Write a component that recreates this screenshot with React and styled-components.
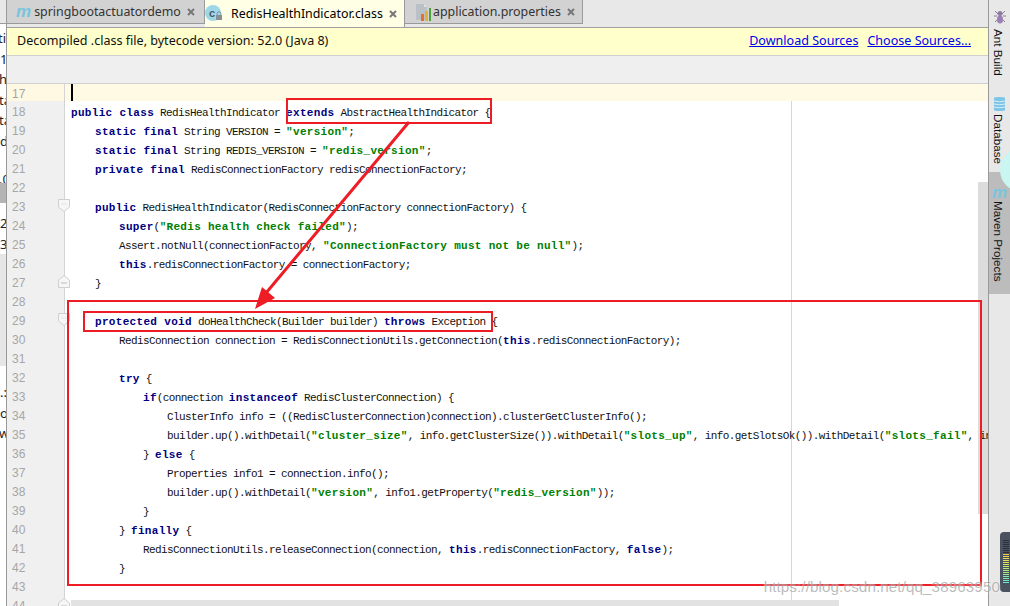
import React from 'react';
import styled, { createGlobalStyle } from 'styled-components';

const GlobalStyle = createGlobalStyle`
  html, body { margin: 0; padding: 0; background: #fff; }
  body { font-family: "Noto Sans", "Liberation Sans", sans-serif; }
`;

const Page = styled.div`
  position: relative;
  display: flex;
  width: 1010px;
  height: 606px;
  overflow: hidden;
  background: #fff;
`;

/* window behind the editor, only a sliver shows */
const LeftStrip = styled.div`
  display: flex;
  flex-direction: column;
  flex: 0 0 6px;
  width: 6px;
  overflow: hidden;
  border-right: 1px solid #9a9a9a;
  background: #fff;
`;

const StripBlock = styled.div`
  flex: 0 0 ${p => p.$h}px;
  background: ${p => p.$bg || '#fff'};
  border-bottom: ${p => (p.$line ? '1px solid #9a9a9a' : '0')};
  box-sizing: border-box;
`;

const StripText = styled.div`
  flex: 0 0 ${p => p.$h || 20.5}px;
  line-height: ${p => p.$h || 20.5}px;
  font-size: 13px;
  color: #222;
  white-space: nowrap;
  margin-left: ${p => p.$shift || 0}px;
`;

const Main = styled.div`
  display: flex;
  flex-direction: column;
  flex: 1;
  min-width: 0;
`;

const TabBar = styled.div`
  display: flex;
  flex: 0 0 28px;
  box-sizing: border-box;
  background: #e8e8e8;
  border-bottom: 1px solid #a0a0a0;
`;

const Tab = styled.div`
  display: flex;
  align-items: center;
  box-sizing: border-box;
  width: ${p => p.$w}px;
  height: ${p => (p.$active ? 27 : 24)}px;
  padding: ${p => (p.$active ? '0 0 3px' : '0')} 0 0 ${p => p.$pad}px;
  background: ${p => (p.$active ? '#ffffe6' : '#d2d2d2')};
  color: ${p => (p.$active ? '#000' : '#333')};
  border-right: 1px solid #9a9a9a;
  border-bottom: ${p => (p.$active ? '0' : '1px solid #9a9a9a')};
  font-size: 12.4px;
  white-space: nowrap;
`;

const TabLabel = styled.span`
  flex: 1;
  padding-left: ${p => p.$gap}px;
`;

const CloseMark = styled.svg`
  flex: 0 0 8px;
  width: 8px;
  height: 8px;
  margin-right: ${p => p.$right}px;
`;

const MavenGlyph = styled.span`
  position: relative;
  z-index: 1;
  display: inline-block;
  font-family: "Liberation Sans", sans-serif;
  font-style: italic;
  font-weight: 700;
  font-size: ${p => p.$size}px;
  line-height: 1;
  color: #79c4de;
`;

const Banner = styled.div`
  display: flex;
  align-items: center;
  flex: 0 0 28px;
  box-sizing: border-box;
  padding: 0 17px 2px 10px;
  background: #ffffcc;
  border-bottom: 1px solid #d0d0d0;
  font-size: 12.55px;
  color: #111;
`;

const BannerText = styled.span`
  flex: 1;
`;

const BannerLink = styled.a`
  color: #0000ee;
  text-decoration: underline;
  margin-left: 9px;
`;

const Toolbar = styled.div`
  flex: 0 0 28px;
  box-sizing: border-box;
  background: #efefef;
  border-bottom: 1px solid #d0d0d0;
`;

const Editor = styled.div`
  position: relative;
  flex: 1;
  overflow: hidden;
  background: #fff;
`;

const MarginLine = styled.div`
  position: absolute;
  left: 784px;
  top: 0;
  bottom: 0;
  width: 1px;
  background: #d6d6d6;
`;

const ScrollThumb = styled.div`
  position: absolute;
  left: 971px;
  top: 98px;
  width: 10px;
  height: 332px;
  background: #dcdcdc;
`;

const HorizontalThumb = styled.div`
  position: absolute;
  left: 64px;
  bottom: 0;
  width: 768px;
  height: 6px;
  background: #e2e2e2;
  z-index: 2;
`;

const Lines = styled.div`
  position: relative;
  z-index: 1;
`;

const Row = styled.div`
  display: flex;
  height: ${p => (p.$current ? 17 : 19)}px;
  background: ${p => (p.$current ? '#fffae3' : 'transparent')};
`;

const LineNo = styled.div`
  position: relative;
  flex: 0 0 58px;
  box-sizing: border-box;
  padding-left: 5px;
  background: ${p => (p.$current ? '#fff8e3' : '#f0f0f0')};
  border-right: 1px solid #d4d4d4;
  color: #a6a6a6;
  font-family: "Liberation Sans", sans-serif;
  font-size: 12px;
  line-height: ${p => (p.$current ? 20 : 23)}px;
`;

const FoldMark = styled.svg`
  position: absolute;
  right: -6px;
  top: 3px;
  width: 12px;
  height: 13px;
`;

const Code = styled.div`
  flex: 1;
  position: relative;
  padding-left: ${p => 6 + p.$indent * 24}px;
  font-family: "Liberation Mono", monospace;
  font-size: 11px;
  letter-spacing: -0.6px;
  line-height: 24px;
  white-space: pre;
  color: #111;
`;

const Keyword = styled.span`
  color: #000080;
  font-weight: 700;
  letter-spacing: 0.32px;
`;

const Str = styled.span`
  color: #008000;
  font-weight: 700;
  letter-spacing: 0.3px;
`;

const Caret = styled.div`
  position: absolute;
  left: 6px;
  top: 0;
  width: 2px;
  height: 17px;
  background: #000;
`;

const RightBar = styled.div`
  display: flex;
  flex-direction: column;
  flex: 0 0 22px;
  box-sizing: border-box;
  padding-top: 10px;
  background: #e8e8e8;
  border-left: 1px solid #999;
`;

const SideTool = styled.div`
  display: flex;
  flex-direction: column;
  align-items: center;
  gap: ${p => p.$gap}px;
  height: ${p => p.$h}px;
  padding-top: ${p => p.$top || 0}px;
  box-sizing: border-box;
  background: ${p => (p.$active ? '#bcbcbc' : 'transparent')};
`;

const SideLabel = styled.span`
  position: relative;
  z-index: 1;
  writing-mode: vertical-rl;
  margin-right: 3px;
  font-family: "Liberation Sans", sans-serif;
  font-size: 11.7px;
  line-height: 14px;
  color: #111;
  white-space: nowrap;
`;

const Bubble = styled.div`
  position: absolute;
  left: 1000px;
  top: 148px;
  width: 44px;
  height: 44px;
  border-radius: 50%;
  background: #c9f6f1;
`;

const Meter = styled.div`
  position: absolute;
  left: 1000px;
  top: 532px;
  display: flex;
  flex-direction: column;
  gap: 1px;
  box-sizing: border-box;
  width: 14px;
  height: 60px;
  padding: 8px 0 0 3px;
  border-radius: 4px 0 0 4px;
  background: #4a5260;
`;

const MeterTick = styled.div`
  width: 6px;
  height: 1px;
  background: ${p => p.$color};
`;

const RedBox = styled.div`
  position: absolute;
  left: ${p => p.$x}px;
  top: ${p => p.$y}px;
  width: ${p => p.$w}px;
  height: ${p => p.$h}px;
  box-sizing: border-box;
  border: 2px solid #ee1c25;
  z-index: 3;
`;

const ArrowLayer = styled.svg`
  position: absolute;
  left: 0;
  top: 0;
  width: 1010px;
  height: 606px;
  z-index: 4;
  pointer-events: none;
`;

const Watermark = styled.div`
  position: absolute;
  right: 10px;
  top: 577px;
  z-index: 5;
  font-family: "Liberation Sans", sans-serif;
  font-size: 15.2px;
  line-height: 20px;
  letter-spacing: 0.1px;
  color: rgba(120, 120, 120, 0.5);
  text-shadow: 0 0 2px rgba(255, 255, 255, 0.9);
`;

// *word* is a keyword, ~word~ is a string
const source = [
  [17, 0, ''],
  [18, 0, '*public class* RedisHealthIndicator *extends* AbstractHealthIndicator {'],
  [19, 1, '*static final* String VERSION = ~"version"~;'],
  [20, 1, '*static final* String REDIS_VERSION = ~"redis_version"~;'],
  [21, 1, '*private final* RedisConnectionFactory redisConnectionFactory;'],
  [22, 0, ''],
  [23, 1, '*public* RedisHealthIndicator(RedisConnectionFactory connectionFactory) {', 'down'],
  [24, 2, '*super*(~"Redis health check failed"~);'],
  [25, 2, 'Assert.notNull(connectionFactory, ~"ConnectionFactory must not be null"~);'],
  [26, 2, '*this*.redisConnectionFactory = connectionFactory;'],
  [27, 1, '}', 'up'],
  [28, 0, ''],
  [29, 1, '*protected void* doHealthCheck(Builder builder) *throws* Exception {', 'down'],
  [30, 2, 'RedisConnection connection = RedisConnectionUtils.getConnection(*this*.redisConnectionFactory);'],
  [31, 0, ''],
  [32, 2, '*try* {'],
  [33, 3, '*if*(connection *instanceof* RedisClusterConnection) {'],
  [34, 4, 'ClusterInfo info = ((RedisClusterConnection)connection).clusterGetClusterInfo();'],
  [35, 4, 'builder.up().withDetail(~"cluster_size"~, info.getClusterSize()).withDetail(~"slots_up"~, info.getSlotsOk()).withDetail(~"slots_fail"~, info.getSlotsFail());'],
  [36, 3, '} *else* {'],
  [37, 4, 'Properties info1 = connection.info();'],
  [38, 4, 'builder.up().withDetail(~"version"~, info1.getProperty(~"redis_version"~));'],
  [39, 3, '}'],
  [40, 2, '} *finally* {'],
  [41, 3, 'RedisConnectionUtils.releaseConnection(connection, *this*.redisConnectionFactory, *false*);'],
  [42, 2, '}'],
  [43, 0, ''],
  [44, 1, '}', 'up'],
];

const renderCode = text =>
  text.split(/(\*[^*]+\*|~[^~]+~)/).map((part, i) => {
    if (part[0] === '*') return <Keyword key={i}>{part.slice(1, -1)}</Keyword>;
    if (part[0] === '~') return <Str key={i}>{part.slice(1, -1)}</Str>;
    return part;
  });

const Close = ({ right }) => (
  <CloseMark $right={right} viewBox="0 0 8 8">
    <path d="M1 1 L7 7 M7 1 L1 7" stroke="#777" strokeWidth="2" />
  </CloseMark>
);

const ClassIcon = () => (
  <svg width="19" height="19" viewBox="0 0 19 19" style={{ flex: '0 0 19px' }}>
    <circle cx="8" cy="9" r="8" fill="#9ed8e8" />
    <text x="4" y="13" fontFamily="Liberation Sans" fontSize="11" fontWeight="700" fill="#4a5a66">c</text>
    <rect x="11" y="11" width="6" height="5" fill="#8a8f96" />
    <path d="M12.2 11 V9.5 a1.8 1.8 0 0 1 3.6 0 V11" fill="none" stroke="#8a8f96" strokeWidth="1" />
  </svg>
);

const PropsIcon = () => (
  <svg width="15" height="18" viewBox="0 0 15 18" style={{ flex: '0 0 15px' }}>
    <path d="M0 1 H8 L11 4 V17 H0 Z" fill="#b9c0c6" />
    <path d="M8 1 V4 H11" fill="#dfe3e6" />
    <rect x="5" y="11" width="3" height="7" fill="#e8702a" />
    <rect x="9" y="8" width="3" height="10" fill="#e2b33c" />
    <rect x="13" y="5" width="2" height="13" fill="#4aa33f" />
  </svg>
);

const AntIcon = () => (
  <svg width="12" height="14" viewBox="0 0 12 14">
    <path d="M1 1 L4 4 M11 1 L8 4 M0 6 H3 M9 6 H12 M1 12 L4 9 M11 12 L8 9" stroke="#8a7f90" strokeWidth="1" />
    <ellipse cx="6" cy="3.5" rx="2.5" ry="2.5" fill="#8d7aa5" />
    <ellipse cx="6" cy="9.5" rx="3" ry="4" fill="#9a7fb5" />
  </svg>
);

const DatabaseIcon = () => (
  <svg width="13" height="14" viewBox="0 0 13 14">
    <path d="M1 1 a5.5 1 0 0 1 11 0 V13 a5.5 1 0 0 1 -11 0 Z" fill="#7cc5e6" />
    <path d="M1 4 Q6.5 5.5 12 4 M1 7 Q6.5 8.5 12 7 M1 10 Q6.5 11.5 12 10" stroke="#d8eef8" strokeWidth="1" fill="none" />
  </svg>
);

const meterColors = [
  '#2b303a', '#2b303a', '#2b303a', '#2b303a', '#2b303a', '#2b303a', '#2b303a',
  '#f2c94c', '#f2d04c', '#f0d84c', '#e8e05a', '#e0e45c', '#d8e85e', '#c8e86a', '#bce874',
  '#b0e880', '#a4e88c', '#98e898', '#8ce8a4', '#80e8b0', '#70e8c0', '#68e8d0',
];

const App = () => (
  <Page>
    <GlobalStyle />
    <LeftStrip>
      <StripBlock $h={24} $bg="#e8e8e8" $line />
      <StripText $h={4} />
      <StripText $shift={-2}>ti</StripText>
      <StripText>1</StripText>
      <StripText $shift={-1}>he</StripText>
      <StripText $shift={-1}>ta</StripText>
      <StripText $shift={-1}>ta</StripText>
      <StripText>d</StripText>
      <StripText $h={24} />
      <StripText $shift={-1} $h={8}>.0</StripText>
      <StripBlock $h={20} $bg="#b4b4b4" />
      <StripText $h={10} />
      <StripText>2</StripText>
      <StripText>3</StripText>
      <StripBlock $h={112} $bg="#e6e6e6" />
      <StripBlock $h={16} />
      <StripText>.:</StripText>
      <StripText>o</StripText>
      <StripText $shift={-1}>w</StripText>
    </LeftStrip>

    <Main>
      <TabBar>
        <Tab $w={198} $pad={9}>
          <MavenGlyph $size={17}>m</MavenGlyph>
          <TabLabel $gap={3}>springbootactuatordemo</TabLabel>
          <Close right={9} />
        </Tab>
        <Tab $w={200} $pad={8} $active>
          <ClassIcon />
          <TabLabel $gap={7}>RedisHealthIndicator.class</TabLabel>
          <Close right={7} />
        </Tab>
        <Tab $w={178} $pad={11}>
          <PropsIcon />
          <TabLabel $gap={2}>application.properties</TabLabel>
          <Close right={7} />
        </Tab>
      </TabBar>

      <Banner>
        <BannerText>Decompiled .class file, bytecode version: 52.0 (Java 8)</BannerText>
        <BannerLink>Download Sources</BannerLink>
        <BannerLink>Choose Sources...</BannerLink>
      </Banner>

      <Toolbar />

      <Editor>
        <ScrollThumb />
        <MarginLine />
        <Lines>
          {source.map(([no, indent, text, fold]) => (
            <Row key={no} $current={no === 17}>
              <LineNo $current={no === 17}>
                {no}
                {fold && (
                  <FoldMark viewBox="0 0 12 13">
                    <path
                      d={fold === 'down' ? 'M.5 .5 H11.5 V8 L6 12.5 L.5 8 Z' : 'M.5 12.5 H11.5 V5 L6 .5 L.5 5 Z'}
                      fill="#f6f6f6"
                      stroke="#cfcfcf"
                    />
                    {fold === 'up' && <path d="M3 8 H9" stroke="#bdbdbd" />}
                    {fold === 'down' && <path d="M3 5 H9" stroke="#e4e4e4" />}
                  </FoldMark>
                )}
              </LineNo>
              <Code $indent={indent}>
                {no === 17 && <Caret />}
                {renderCode(text)}
              </Code>
            </Row>
          ))}
        </Lines>
        <HorizontalThumb />
      </Editor>
    </Main>

    <RightBar>
      <SideTool $h={87} $gap={5}>
        <AntIcon />
        <SideLabel>Ant Build</SideLabel>
      </SideTool>
      <SideTool $h={75} $gap={3}>
        <DatabaseIcon />
        <SideLabel>Database</SideLabel>
      </SideTool>
      <SideTool $h={122} $gap={0} $top={12} $active>
        <MavenGlyph $size={17}>m</MavenGlyph>
        <SideLabel>Maven Projects</SideLabel>
      </SideTool>
    </RightBar>

    <Bubble />
    <Meter>
      {meterColors.map((c, i) => (
        <MeterTick key={i} $color={c} />
      ))}
    </Meter>

    <RedBox $x={286} $y={98} $w={206} $h={26} />
    <RedBox $x={83} $y={311} $w={410} $h={21} />
    <RedBox $x={67} $y={300} $w={915} $h={286} />
    <ArrowLayer viewBox="0 0 1010 606">
      <path d="M409 122 L266 293" stroke="#ee1c25" strokeWidth="3" fill="none" />
      <path d="M255 309 L262 287 L275 298 Z" fill="#ee1c25" />
    </ArrowLayer>
    <Watermark>https://blog.csdn.net/qq_38963950</Watermark>
  </Page>
);

export default App;
